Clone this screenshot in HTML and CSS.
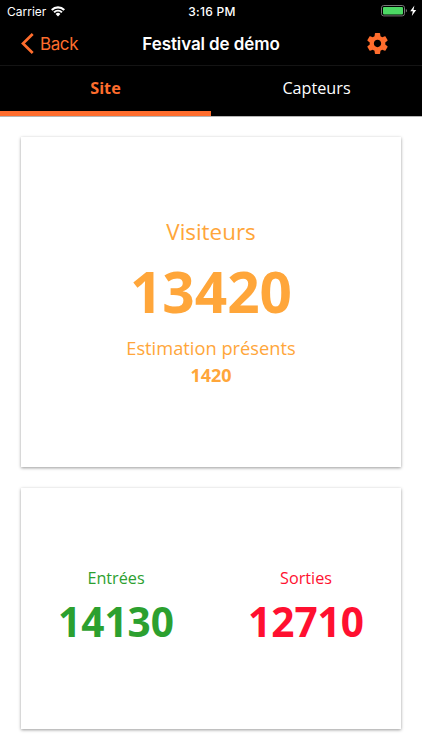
FILE: index.html
```html
<!DOCTYPE html>
<html lang="fr">
<head>
    <meta charset="UTF-8">
    <meta name="viewport" content="width=device-width, initial-scale=1.0">
    <title>Festival de démo</title>
    <link rel="stylesheet" href="styles.css">
</head>
<body>
    <header class="header">
        <div class="status-bar">
            <div class="carrier">
                <span class="carrier-name">Carrier</span>
                <svg class="wifi" width="14" height="11" viewBox="0 0 14 11" fill="#fff">
                    <path d="M0 3.2 A10 10 0 0 1 14 3.2 L12.5 4.8 A7.9 7.9 0 0 0 1.5 4.8 Z"/>
                    <path d="M2.3 5.7 A6.7 6.7 0 0 1 11.7 5.7 L10.2 7.1 A4.7 4.7 0 0 0 3.8 7.1 Z"/>
                    <path d="M4.6 8 A3.5 3.5 0 0 1 9.4 8 L7 10.5 Z"/>
                </svg>
            </div>
            <div class="time">3:16 PM</div>
            <div class="power">
                <svg width="36" height="12" viewBox="0 0 36 12">
                    <rect x="0.5" y="0.5" width="23" height="10.4" rx="2.2" fill="none" stroke="#777"/>
                    <rect x="2" y="2" width="20" height="7.4" rx="1" fill="#4cd964"/>
                    <path d="M24.8 4 Q26 4.4 26 5.7 Q26 7 24.8 7.4 Z" fill="#777"/>
                    <path d="M33.4 0.6 L29.2 6.3 H31.8 L30.8 11 L35.2 5 H32.5 Z" fill="#fff"/>
                </svg>
            </div>
        </div>
        <nav class="nav-bar">
            <a class="back" href="#">
                <svg width="13" height="21" viewBox="0 0 13 21" fill="none" stroke="#ff6d2d" stroke-width="2.7">
                    <path d="M11.7 1 L2 10.5 L11.7 20"/>
                </svg>
                <span>Back</span>
            </a>
            <h1 class="title">Festival de démo</h1>
            <a class="settings" href="#" aria-label="Réglages">
                <svg width="25" height="25" viewBox="0 0 24 24" fill="#ff6d2d">
                    <path d="M19.43 12.98c.04-.32.07-.64.07-.98s-.03-.66-.07-.98l2.11-1.65c.19-.15.24-.42.12-.64l-2-3.46c-.12-.22-.39-.3-.61-.22l-2.49 1c-.52-.4-1.08-.73-1.69-.98l-.38-2.65C14.46 2.18 14.25 2 14 2h-4c-.25 0-.46.18-.49.42l-.38 2.65c-.61.25-1.17.59-1.69.98l-2.49-1c-.23-.09-.49 0-.61.22l-2 3.46c-.13.22-.07.49.12.64l2.11 1.65c-.04.32-.07.65-.07.98s.03.66.07.98l-2.11 1.65c-.19.15-.24.42-.12.64l2 3.46c.12.22.39.3.61.22l2.49-1c.52.4 1.08.73 1.69.98l.38 2.65c.03.24.24.42.49.42h4c.25 0 .46-.18.49-.42l.38-2.65c.61-.25 1.17-.59 1.69-.98l2.49 1c.23.09.49 0 .61-.22l2-3.46c.12-.22.07-.49-.12-.64l-2.11-1.65zM12 15.5c-1.93 0-3.5-1.57-3.5-3.5s1.57-3.5 3.5-3.5 3.5 1.57 3.5 3.5-1.57 3.5-3.5 3.5z"/>
                </svg>
            </a>
        </nav>
        <div class="tabs">
            <a class="tab active" href="#">Site</a>
            <a class="tab" href="#">Capteurs</a>
        </div>
    </header>
    <main class="content">
        <section class="card visitors">
            <div class="visitors-label">Visiteurs</div>
            <div class="visitors-count">13420</div>
            <div class="present-label">Estimation présents</div>
            <div class="present-count">1420</div>
        </section>
        <section class="card flow">
            <div class="flow-item in">
                <div class="flow-label">Entrées</div>
                <div class="flow-count">14130</div>
            </div>
            <div class="flow-item out">
                <div class="flow-label">Sorties</div>
                <div class="flow-count">12710</div>
            </div>
        </section>
    </main>
</body>
</html>
```
FILE: styles.css
```css
* {
    box-sizing: border-box;
}
body {
    margin: 0;
    height: 750px;
    background: #fff;
    font-family: 'Open Sans', 'Noto Sans', sans-serif;
}
a {
    color: inherit;
    text-decoration: none;
}
svg {
    display: block;
}
.header {
    height: 117px;
    border-bottom: 1px solid #b5b5b5;
    background: #000;
    color: #fff;
}
.status-bar {
    display: grid;
    grid-template-columns: 1fr auto 1fr;
    align-items: center;
    height: 22px;
    padding: 0 5px 0 7px;
    font-family: Inter, sans-serif;
    font-size: 12px;
}
.carrier {
    display: flex;
    align-items: center;
    gap: 5px;
}
.time {
    font-weight: 500;
    letter-spacing: 0.3px;
}
.power {
    justify-self: end;
}
.nav-bar {
    display: grid;
    grid-template-columns: 1fr auto 1fr;
    align-items: center;
    height: 44px;
    padding: 0 21px;
    border-bottom: 1px solid #141414;
    font-family: Inter, sans-serif;
}
.back {
    display: flex;
    align-items: center;
    gap: 6px;
    color: #ff6d2d;
    font-size: 17px;
    letter-spacing: -0.4px;
}
.title {
    margin: 0;
    font-size: 17px;
    font-weight: 600;
    letter-spacing: -0.1px;
}
.settings {
    justify-self: end;
    margin-right: 11px;
}
.tabs {
    display: flex;
    height: 50px;
}
.tab {
    flex: 1;
    padding-top: 11px;
    border-bottom: 5px solid transparent;
    font-size: 16.2px;
    line-height: 22px;
    text-align: center;
}
.tab.active {
    border-color: #ff6d2d;
    color: #ff6d2d;
    font-weight: 700;
}
.content {
    display: flex;
    flex-direction: column;
    gap: 21px;
    padding: 20px 21px 0;
}
.card {
    background: #fff;
    box-shadow: 0 1px 3px rgba(0, 0, 0, 0.4);
}
.visitors {
    height: 330px;
    padding-top: 79px;
    color: #ffa63a;
    text-align: center;
}
.visitors-label {
    font-size: 22.4px;
    line-height: 32px;
}
.visitors-count {
    font-size: 56.7px;
    font-weight: 700;
    line-height: 86px;
}
.present-label {
    font-size: 18.3px;
    line-height: 28px;
}
.present-count {
    font-size: 18px;
    font-weight: 700;
    line-height: 27px;
}
.flow {
    display: flex;
    height: 241px;
    padding-top: 78px;
}
.flow-item {
    flex: 1;
    text-align: center;
}
.flow-label {
    font-size: 16.2px;
    line-height: 24px;
}
.flow-count {
    font-size: 40.6px;
    font-weight: 700;
    line-height: 64px;
}
.in {
    color: #2ca02f;
}
.out {
    color: #ff1030;
}
```
